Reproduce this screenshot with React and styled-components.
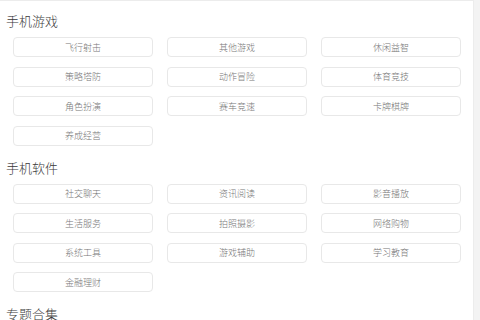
import React from 'react'
import styled, { createGlobalStyle } from 'styled-components'

const sections = [
  {
    title: '手机游戏',
    items: ['飞行射击', '其他游戏', '休闲益智', '策略塔防', '动作冒险', '体育竞技', '角色扮演', '赛车竞速', '卡牌棋牌', '养成经营'],
  },
  {
    title: '手机软件',
    items: ['社交聊天', '资讯阅读', '影音播放', '生活服务', '拍照摄影', '网络购物', '系统工具', '游戏辅助', '学习教育', '金融理财'],
  },
  {
    title: '专题合集',
    items: [],
  },
]

export default () => {
  return (
    <Page>
      <GlobalStyle />
      <Panel>
        {sections.map(section => (
          <Section key={section.title}>
            <SectionTitle>{section.title}</SectionTitle>
            {section.items.length > 0 && (
              <TagGrid>
                {section.items.map(item => (
                  <Tag key={item}>{item}</Tag>
                ))}
              </TagGrid>
            )}
          </Section>
        ))}
      </Panel>
    </Page>
  )
}

const GlobalStyle = createGlobalStyle`
  html, body {
    margin: 0;
    padding: 0;
    background: #f3f3f3;
    font-family: "Noto Sans CJK SC", "Noto Sans", sans-serif;
  }
`
const Page = styled.div`
  width: 480px;
  height: 320px;
  overflow: hidden;
  background: #f3f3f3;
`
const Panel = styled.div`
  width: 474px;
  min-height: 320px;
  box-sizing: border-box;
  background: #fff;
  border-top: 1px solid #ececec;
  border-right: 1px solid #ececec;
  padding: 8px 12px 0 6px;
`
const Section = styled.div`
  margin-bottom: 10px;
`
const SectionTitle = styled.h2`
  margin: 0;
  font-size: 13px;
  font-weight: 300;
  line-height: 24px;
  color: #3a3a3a;
`
const TagGrid = styled.div`
  display: grid;
  grid-template-columns: repeat(3, 140px);
  column-gap: 14px;
  row-gap: 9.5px;
  margin-top: 4px;
  padding-left: 7px;
`
const Tag = styled.div`
  height: 20px;
  box-sizing: border-box;
  border: 1px solid #e8e8e8;
  border-radius: 4px;
  display: flex;
  align-items: center;
  justify-content: center;
  font-size: 9px;
  font-weight: 300;
  color: #777;
  background: #fff;
`
